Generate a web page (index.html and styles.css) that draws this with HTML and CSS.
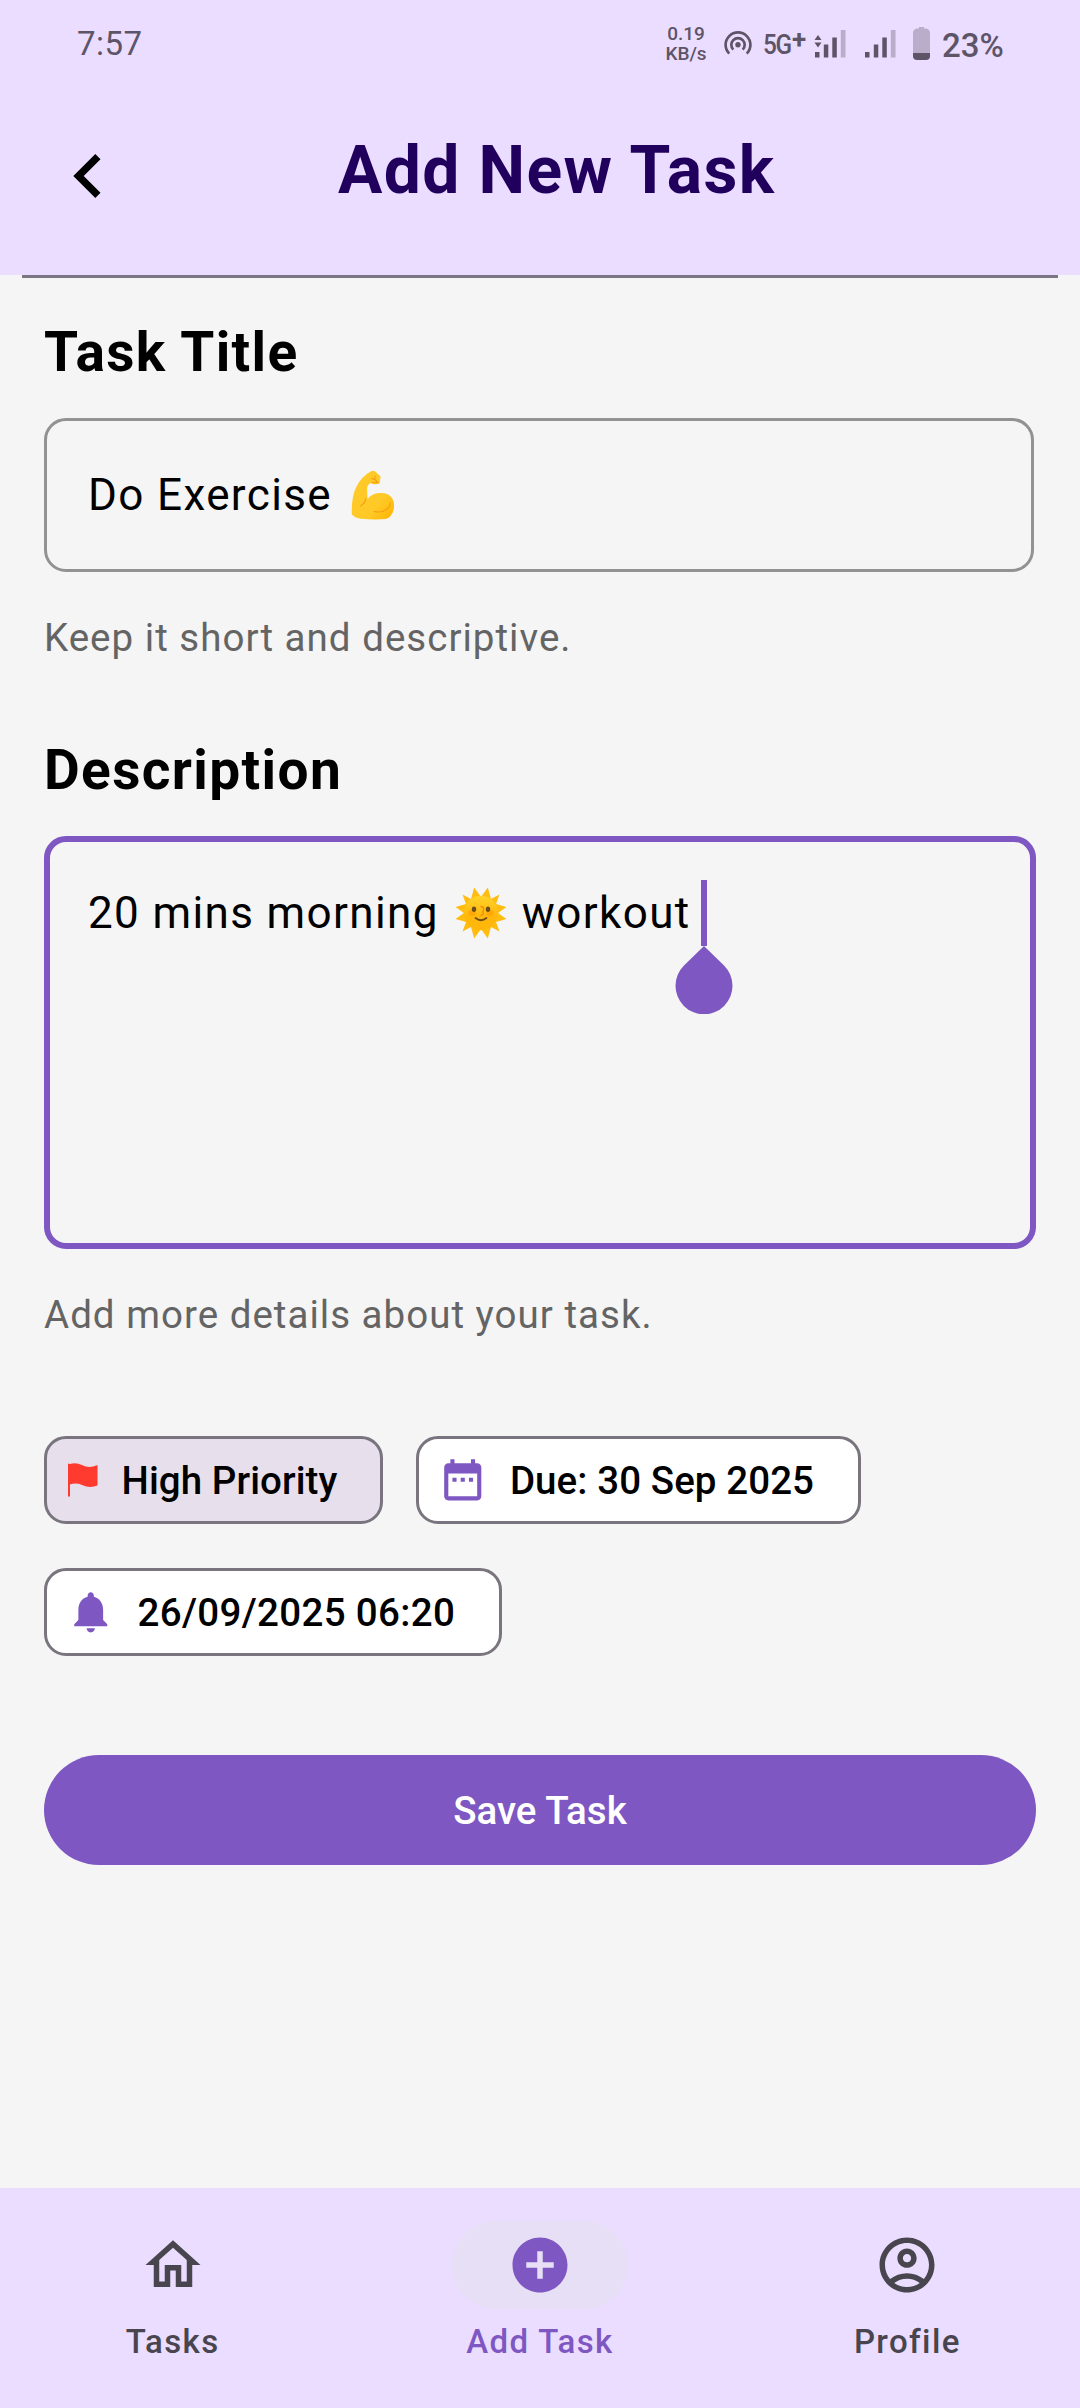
FILE: index.html
```html
<!DOCTYPE html>
<html lang="en">
<head>
<meta charset="utf-8">
<title>Add New Task</title>
<link rel="stylesheet" href="styles.css">
</head>
<body>
<div class="screen">
  <header class="top">
    <div class="status">
      <span class="clock">7:57</span>
      <div class="status-right">
        <div class="speed"><span>0.19</span><span>KB/s</span></div>
        <svg class="hotspot" width="28" height="24" viewBox="0 0 28 24" fill="none" stroke="#5e5467" stroke-width="2.7">
          <path d="M5.2 22.6A12.4 12.4 0 1 1 22.8 22.6"/>
          <path d="M9.3 18.6A6.7 6.7 0 1 1 18.7 18.6"/>
          <circle cx="14" cy="13.8" r="2.7" fill="#5e5467" stroke="none"/>
        </svg>
        <span class="network">5G</span><span class="plus">+</span>
        <svg class="bars" width="32" height="28" viewBox="0 0 32 28" fill="#5e5467">
          <path d="M0.5 10L4 5l3.500 5zM0.500 12.500L4 17.500l3.500-5zM1 22h4.500v5.500H1zM9.800 14.500h4.500v13H9.800zM18.300 7.500h4.500v20h-4.500z"/>
          <path opacity=".35" d="M26.800 0h4.700v27.500h-4.700z"/>
        </svg>
        <svg class="bars second" width="32" height="28" viewBox="0 0 32 28" fill="#5e5467">
          <path d="M1 22h4.500v5.500H1zM9.800 14.500h4.500v13H9.800zM18.300 7.500h4.500v20h-4.500z"/>
          <path opacity=".35" d="M26.800 0h4.700v27.500h-4.700z"/>
        </svg>
        <svg class="battery" width="17" height="33" viewBox="0 0 17 33" fill="#5e5467">
          <path opacity=".35" d="M6 0h5v1.500h2.500Q17 2.500 17 6v20H0V6q0-3.500 3.500-4.500H6z"/>
          <path d="M0 26h17v3q0 4-4 4H4q-4 0-4-4z"/>
        </svg>
        <span class="percent">23%</span>
      </div>
    </div>
    <div class="appbar">
      <svg class="back" width="88" height="88" viewBox="0 0 24 24"><path d="M15.410 16.590L10.830 12l4.580-4.590L14 6l-6 6 6 6z"/></svg>
      <h1>Add New Task</h1>
    </div>
  </header>
  <main>
    <h2>Task Title</h2>
    <div class="field title-field">
      <span>Do Exercise</span>
      <svg class="muscle" width="44" height="50" viewBox="62 60 131 150">
        <defs>
          <linearGradient id="arm" x1="0" y1="0" x2="1" y2="1"><stop offset=".65" stop-color="#ffca28"/><stop offset="1" stop-color="#ffb300"/></linearGradient>
        </defs>
        <path fill="url(#arm)" d="M122 64Q129 60 136 66L148 77Q152 81 149 87L148 95Q149 102 141 102L132 103Q126 103 122 99L113 104Q109 110 110 122L111 147Q124 131 146 129Q174 127 185 145Q194 160 189 180Q184 201 166 207Q130 210 90 206Q70 203 64 193Q62 145 76 113Q94 78 122 64z"/>
        <path fill="none" stroke="#f4a117" stroke-width="3.500" stroke-linecap="round" d="M106 145Q106 158 90 168M131 184Q153 190 169 178Q179 171 179 159M124 86L137 90M134 78L132 88L140 96M125 97Q132 100 143 97"/>
      </svg>
    </div>
    <p class="hint">Keep it short and descriptive.</p>
    <h2 class="second-title">Description</h2>
    <div class="field area">
      <span>20 mins morning</span>
      <svg class="sun" width="52" height="52" viewBox="-26 -26 52 52">
        <defs><linearGradient id="disc" x1="0" y1="0" x2="0" y2="1"><stop offset="0" stop-color="#ffd32c"/><stop offset=".6" stop-color="#ffb70c"/></linearGradient></defs>
        <path fill="#ffbd12" d="M-6.800 -25.500L0 -16L6.800 -25.500L10 -14L18.500 -18.500L15 -9L25.500 -6L17 0L25.500 6L15 9L18.500 18.500L10 14L6.800 25.500L0 16L-6.800 25.500L-10 14L-18.500 18.500L-15 9L-25.500 6L-17 0L-25.500 -6L-15 -9L-18.500 -18.500L-10 -14z"/>
        <circle r="17.200" fill="url(#disc)"/>
        <ellipse cx="-9" cy="0" rx="3.600" ry="3" fill="#ff8f00" opacity=".45"/>
        <ellipse cx="9" cy="0" rx="3.600" ry="3" fill="#ff8f00" opacity=".45"/>
        <ellipse cx="-7" cy="-3.700" rx="2.200" ry="2.700" fill="#6d4c1d"/>
        <ellipse cx="7" cy="-3.700" rx="2.200" ry="2.700" fill="#6d4c1d"/>
        <path d="M-.5 -6.500C3.500 -6.500 3 -3.500 1.800 -1.500Q3.500 2 -.5 2.500" fill="none" stroke="#f08a00" stroke-width="1.300"/>
        <path d="M-5.500 5Q0 9.500 5.500 5" fill="none" stroke="#6d4c1d" stroke-width="1.700" stroke-linecap="round"/>
      </svg>
      <span>workout</span>
      <span class="caret"><svg class="handle" width="58" height="68" viewBox="0 0 58 68"><path fill="#7e57c2" d="M29 0L49 19.500A28.500 28.500 0 1 1 9 19.500z"/></svg></span>
    </div>
    <p class="hint">Add more details about your task.</p>
    <div class="chips">
      <div class="chip selected">
        <svg class="flag" width="30" height="34" viewBox="0 0 30 34" fill="#ff3b30"><path d="M0 .5L2 1Q8-.8 14 2Q21 6 29.500 2V22.500Q22 25.500 14 22Q8 19.500 2 21.500V33.500H0z"/></svg>
        <span>High Priority</span>
      </div>
      <div class="chip due">
        <svg width="49.500" height="49.500" viewBox="0 0 24 24" fill="#7e57c2"><path d="M9 11H7v2h2v-2zm4 0h-2v2h2v-2zm4 0h-2v2h2v-2zm2-7h-1V2h-2v2H8V2H6v2H5c-1.110 0-1.990.9-1.990 2L3 20c0 1.100.89 2 2 2h14c1.100 0 2-.9 2-2V6c0-1.100-.9-2-2-2zm0 16H5V9h14v11z"/></svg>
        <span>Due: 30 Sep 2025</span>
      </div>
      <div class="chip reminder">
        <svg width="49.500" height="49.500" viewBox="0 0 24 24" fill="#7e57c2"><path d="M12 22c1.100 0 2-.9 2-2h-4c0 1.100.89 2 2 2zm6-6v-5c0-3.070-1.640-5.640-4.500-6.320V4c0-.83-.67-1.500-1.500-1.500s-1.500.67-1.500 1.500v.68C7.630 5.360 6 7.920 6 11v5l-2 2v1h16v-1l-2-2z"/></svg>
        <span>26/09/2025 06:20</span>
      </div>
    </div>
    <button class="save">Save Task</button>
  </main>
  <nav>
    <a class="tab">
      <span class="pill"><svg width="66" height="66" viewBox="0 0 24 24" fill="currentColor"><path d="M12 5.690l5 4.500V18h-2v-6H9v6H7v-7.810l5-4.500M12 3L2 12h3v8h6v-6h2v6h6v-8h3L12 3z"/></svg></span>
      <span>Tasks</span>
    </a>
    <a class="tab active">
      <span class="pill"><svg width="66" height="66" viewBox="0 0 24 24" fill="currentColor"><path d="M12 2C6.480 2 2 6.480 2 12s4.480 10 10 10 10-4.480 10-10S17.520 2 12 2zm5 11h-4v4h-2v-4H7v-2h4V7h2v4h4v2z"/></svg></span>
      <span>Add Task</span>
    </a>
    <a class="tab">
      <span class="pill"><svg width="66" height="66" viewBox="0 0 24 24" fill="currentColor"><path d="M12 2C6.480 2 2 6.480 2 12s4.480 10 10 10 10-4.480 10-10S17.520 2 12 2zM7.350 18.500C8.660 17.560 10.260 17 12 17s3.340.56 4.650 1.500c-1.310.94-2.910 1.500-4.650 1.500s-3.340-.56-4.650-1.500zm10.790-1.380C16.450 15.800 14.320 15 12 15s-4.450.8-6.140 2.120C4.700 15.730 4 13.950 4 12c0-4.420 3.580-8 8-8s8 3.580 8 8c0 1.950-.7 3.730-1.860 5.120zM12 6c-1.930 0-3.500 1.570-3.500 3.500S10.070 13 12 13s3.500-1.570 3.500-3.500S13.930 6 12 6zm0 5c-.83 0-1.500-.67-1.500-1.500S11.170 8 12 8s1.500.67 1.500 1.500S12.830 11 12 11z"/></svg></span>
      <span>Profile</span>
    </a>
  </nav>
</div>
</body>
</html>
```
FILE: styles.css
```css
* { box-sizing: border-box; }
body {
  margin: 0;
  background: #f5f5f5;
  font-family: Roboto, "Liberation Sans", sans-serif;
  color: #000;
}
svg { display: block; flex: none; }
h1, h2, p { margin: 0; white-space: nowrap; }

.screen {
  width: 1080px;
  height: 2408px;
  display: flex;
  flex-direction: column;
}

/* Status bar and title */
.top { height: 275px; flex: none; background: #eaddff; }
.status {
  height: 88px;
  padding: 0 77px 0 77px;
  display: flex;
  justify-content: space-between;
  color: #5e5467;
}
.clock { font-size: 33px; line-height: 88px; letter-spacing: .5px; }
.status-right { display: flex; align-items: flex-start; }
.speed {
  width: 40px;
  padding-top: 24px;
  display: flex;
  flex-direction: column;
  align-items: center;
  font-size: 19px;
  font-weight: 500;
  line-height: 20px;
}
.hotspot { margin: 31px 0 0 18px; }
.network {
  width: 28px;
  margin: 29px 0 0 11px;
  font-size: 28px;
  font-weight: 500;
  line-height: 32px;
  letter-spacing: -1.5px;
  transform: scaleX(.87);
  transform-origin: left;
}
.plus {
  width: 15px;
  margin: 23px 0 0 1px;
  font-size: 26px;
  font-weight: 700;
  line-height: 32px;
}
.bars { margin: 30px 0 0 7px; }
.bars.second { margin-left: 18px; }
.battery { margin: 27px 0 0 17px; }
.percent {
  width: 61px;
  margin-left: 12px;
  font-size: 33px;
  font-weight: 500;
  line-height: 91px;
}
.appbar {
  display: flex;
  align-items: center;
  padding: 44px 0 0 44px;
  height: 132px;
}
.appbar h1 {
  margin: -11px 0 0 206px;
  font-size: 66px;
  font-weight: 700;
  line-height: 77px;
  letter-spacing: 1.375px;
  color: #21005d;
}

/* Form */
main { flex: 1; padding: 0 44px; }
main::before {
  content: "";
  display: block;
  height: 3px;
  margin: 0 -22px;
  background: #7c7583;
}
h2 {
  margin-top: 41px;
  font-size: 55px;
  line-height: 66px;
  letter-spacing: 1.375px;
}
.second-title { margin-top: 72px; }
.field {
  height: 154px;
  margin-top: 33px;
  padding-left: 41px;
  display: flex;
  align-items: center;
  border: 3px solid #929292;
  border-radius: 22px;
  font-size: 44px;
  line-height: 66px;
  letter-spacing: 1.375px;
  white-space: nowrap;
}
.title-field { margin-right: 2px; }
.muscle { margin-left: 19px; }
.area {
  height: 413px;
  align-items: flex-start;
  padding: 38px 0 0 38px;
  border: 6px solid #7e57c2;
}
.sun { margin: 7px 15px 0 16px; }
.caret {
  position: relative;
  width: 6px;
  height: 66px;
  margin-left: 10px;
  background: #7e57c2;
}
.handle { position: absolute; left: -26px; top: 66px; }
.hint {
  margin-top: 38px;
  font-size: 38.5px;
  line-height: 55px;
  letter-spacing: 1.02px;
  color: #646464;
}
.chips {
  display: flex;
  flex-wrap: wrap;
  gap: 44px 33px;
  margin-top: 94px;
}
.chip {
  height: 88px;
  display: flex;
  align-items: center;
  gap: 22px;
  padding: 0 43px 0 19px;
  border: 3px solid #79747e;
  border-radius: 22px;
  background: #fff;
  font-size: 38.5px;
  font-weight: 500;
  line-height: 55px;
  letter-spacing: .08px;
}
.selected { background: #e8dfec; padding-left: 21px; gap: 23.5px; }
.due { padding-right: 44px; }
.reminder { letter-spacing: .33px; padding-right: 44px; }
.save {
  display: block;
  width: 100%;
  height: 110px;
  margin-top: 99px;
  border: 0;
  border-radius: 55px;
  background: #7e57c2;
  color: #fff;
  font: 500 38.5px/55px Roboto, "Liberation Sans", sans-serif;
  letter-spacing: 0;
}

/* Bottom navigation */
nav {
  height: 220px;
  flex: none;
  display: flex;
  gap: 22px;
  background: #eaddff;
}
.tab {
  flex: 1;
  display: flex;
  flex-direction: column;
  align-items: center;
  gap: 11px;
  padding-top: 33px;
  color: #49454f;
  font-size: 33px;
  font-weight: 500;
  line-height: 44px;
  letter-spacing: 1.375px;
}
.pill {
  width: 176px;
  height: 88px;
  display: flex;
  align-items: center;
  justify-content: center;
  border-radius: 44px;
}
.active { color: #7e57c2; }
.active .pill { background: #e7dff5; }
```
